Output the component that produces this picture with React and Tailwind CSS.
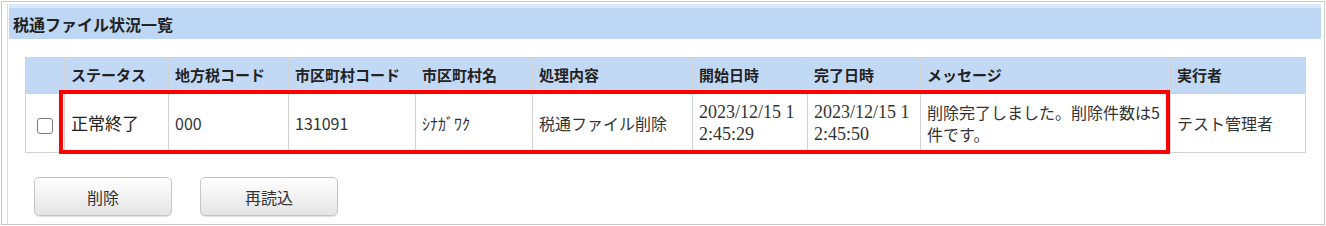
import React from "react";

const jp = { fontFamily: '"Noto Sans CJK JP", "Noto Sans", sans-serif' };

const columns = [
  { label: "", width: "w-[39px]" },
  { label: "ステータス", width: "w-[104px]" },
  { label: "地方税コード", width: "w-[120px]" },
  { label: "市区町村コード", width: "w-[127px]" },
  { label: "市区町村名", width: "w-[117px]" },
  { label: "処理内容", width: "w-[160px]" },
  { label: "開始日時", width: "w-[115px]" },
  { label: "完了日時", width: "w-[113px]" },
  { label: "メッセージ", width: "w-[250px]" },
  { label: "実行者", width: "w-[135px]" },
];

const Button = ({ children }) => (
  <button className="w-[138px] h-[39px] rounded-[5px] border border-[#c6c6c6] bg-gradient-to-b from-white to-[#e4e4e4] shadow-[0_1px_1px_rgba(0,0,0,0.12)] text-[16px] text-[#333]">
    {children}
  </button>
);

const App = () => {
  return (
    <div className="w-[1326px] h-[226px] bg-white pt-[1px] pl-[1px] overflow-hidden" style={jp}>
      <div className="w-[1324px] h-[224px] border border-[#c8c8c8] overflow-hidden">
        {/* inner panel */}
        <div className="ml-[5px] mt-[2px] h-[222px] w-[1315px] border-l border-[#cddff5]">
          {/* title bar */}
          <div className="ml-[1px] h-[35px] w-[1312px] border-t-4 border-[#dbe8fa] bg-[#bed7f5] flex items-center pl-[4px]">
            <h2 className="text-[16px] font-bold text-[#222] leading-none">税通ファイル状況一覧</h2>
          </div>

          {/* table */}
          <div className="relative ml-[17px] mt-[18px] w-[1280px]">
            <table className="table-fixed border-collapse w-[1280px] text-[#222]">
              <thead>
                <tr className="h-[36px] bg-[#c2d9f5]">
                  {columns.map((c, i) => (
                    <th
                      key={i}
                      className={`${c.width} border border-[#d2d2d2] px-[6px] text-left text-[15px] font-bold whitespace-nowrap`}
                    >
                      {c.label}
                    </th>
                  ))}
                </tr>
              </thead>
              <tbody>
                <tr className="h-[59px] bg-white text-[16px] text-[#333]">
                  <td className="border border-[#d2d2d2] text-center">
                    <span className="inline-block w-[16px] h-[16px] rounded-[3px] border border-[#7a7a7a] bg-white align-middle"></span>
                  </td>
                  <td className="border border-[#d2d2d2] px-[6px] text-[17px] text-[#222]">正常終了</td>
                  <td className="border border-[#d2d2d2] px-[6px] text-[16px]">000</td>
                  <td className="border border-[#d2d2d2] px-[6px] text-[16px]">131091</td>
                  <td className="border border-[#d2d2d2] px-[6px]">ｼﾅｶﾞﾜｸ</td>
                  <td className="border border-[#d2d2d2] px-[6px]">税通ファイル削除</td>
                  <td
                    className="border border-[#d2d2d2] px-[6px] text-[18px] leading-[22px] break-all"
                    style={{ fontFamily: '"Liberation Serif", serif' }}
                  >
                    2023/12/15 12:45:29
                  </td>
                  <td
                    className="border border-[#d2d2d2] px-[6px] text-[18px] leading-[22px] break-all"
                    style={{ fontFamily: '"Liberation Serif", serif' }}
                  >
                    2023/12/15 12:45:50
                  </td>
                  <td className="border border-[#d2d2d2] px-[6px] leading-[22px] break-all">
                    削除完了しました。削除件数は5件です。
                  </td>
                  <td className="border border-[#d2d2d2] px-[6px]">テスト管理者</td>
                </tr>
              </tbody>
            </table>
            {/* red highlight annotation */}
            <div className="absolute left-[34px] top-[33px] w-[1111px] h-[64px] border-4 border-[#ff0000] pointer-events-none"></div>
          </div>

          {/* buttons */}
          <div className="ml-[26px] mt-[24px] flex gap-[28px]">
            <Button>削除</Button>
            <Button>再読込</Button>
          </div>
        </div>
      </div>
    </div>
  );
};

export default App;
